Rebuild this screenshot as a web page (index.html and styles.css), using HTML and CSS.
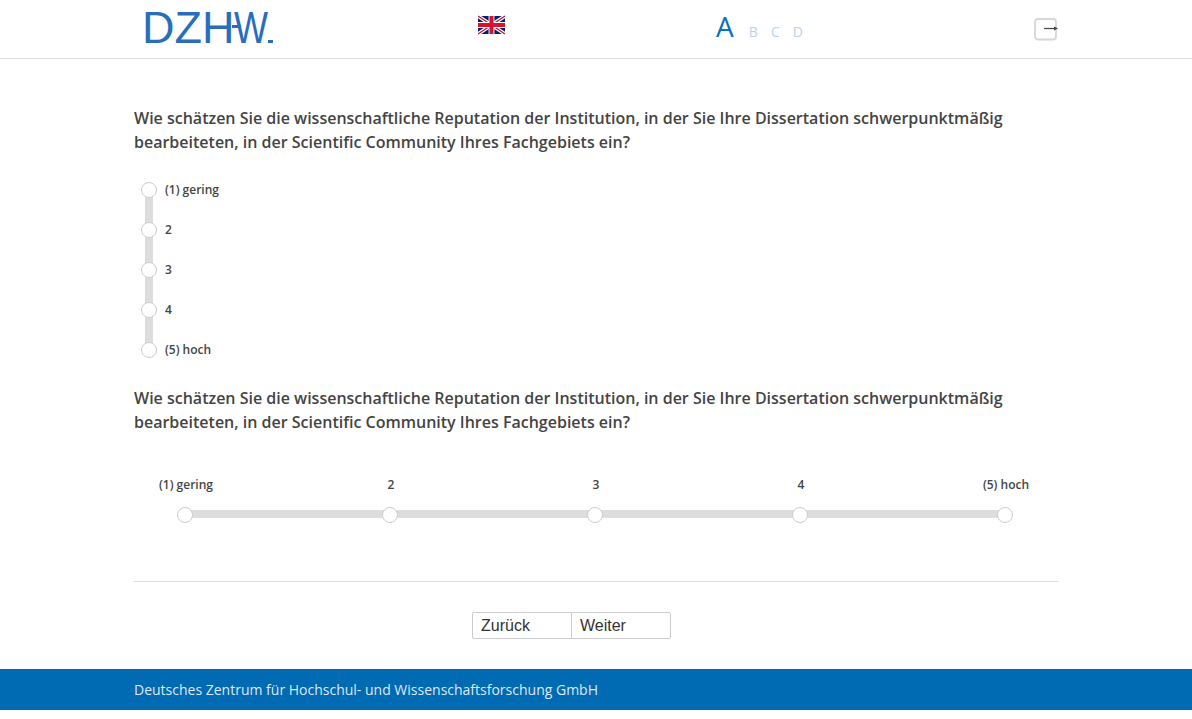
FILE: index.html
```html
<!DOCTYPE html>
<html lang="de">
<head>
<meta charset="utf-8">
<title>DZHW</title>
<link rel="stylesheet" href="styles.css">
</head>
<body>
<header class="header">
  <div class="logo"><span class="logo-text">DZH<span class="logo-w">W</span></span><span class="logo-dot"></span><span class="logo-bar"></span></div>
  <a class="flag" aria-label="English">
    <svg width="27" height="20" viewBox="0 0 60 40">
      <rect width="60" height="40" fill="#012169"/>
      <path d="M0 0L60 40M60 0L0 40" stroke="#fff" stroke-width="8"/>
      <path d="M0 0L60 40M60 0L0 40" stroke="#c8102e" stroke-width="3"/>
      <path d="M30 0V40M0 20H60" stroke="#fff" stroke-width="13"/>
      <path d="M30 0V40M0 20H60" stroke="#d8112e" stroke-width="9"/>
    </svg>
  </a>
  <div class="fontsizes">
    <span class="size-active">A</span>
    <span class="size">B</span>
    <span class="size">C</span>
    <span class="size">D</span>
  </div>
  <a class="exit" aria-label="Beenden">
    <svg width="25" height="23" viewBox="0 0 25 23">
      <rect x="1" y="1" width="21" height="20.5" rx="3" fill="#fff" stroke="#d6d6d6" stroke-width="1.8"/>
      <path d="M10 10.5H21" stroke="#444" stroke-width="1.2"/>
      <path d="M20 8.5L24 10.5L20 12.5Z" fill="#444"/>
    </svg>
  </a>
</header>

<main class="main">
  <h2 class="question">Wie schätzen Sie die wissenschaftliche Reputation der Institution, in der Sie Ihre Dissertation schwerpunktmäßig bearbeiteten, in der Scientific Community Ihres Fachgebiets ein?</h2>
  <div class="vscale">
    <div class="vtrack"></div>
    <label class="vrow"><span class="radio"></span><span class="vlabel">(1) gering</span></label>
    <label class="vrow"><span class="radio"></span><span class="vlabel">2</span></label>
    <label class="vrow"><span class="radio"></span><span class="vlabel">3</span></label>
    <label class="vrow"><span class="radio"></span><span class="vlabel">4</span></label>
    <label class="vrow"><span class="radio"></span><span class="vlabel">(5) hoch</span></label>
  </div>

  <h2 class="question">Wie schätzen Sie die wissenschaftliche Reputation der Institution, in der Sie Ihre Dissertation schwerpunktmäßig bearbeiteten, in der Scientific Community Ihres Fachgebiets ein?</h2>
  <div class="hscale">
    <div class="htrack"></div>
    <label class="hitem"><span class="hlabel">(1) gering</span><span class="radio"></span></label>
    <label class="hitem"><span class="hlabel">2</span><span class="radio"></span></label>
    <label class="hitem"><span class="hlabel">3</span><span class="radio"></span></label>
    <label class="hitem"><span class="hlabel">4</span><span class="radio"></span></label>
    <label class="hitem"><span class="hlabel">(5) hoch</span><span class="radio"></span></label>
  </div>

  <hr class="divider">
  <div class="nav">
    <button class="btn" type="button">Zurück</button><button class="btn btn-next" type="button">Weiter</button>
  </div>
</main>

<footer class="footer">Deutsches Zentrum für Hochschul- und Wissenschaftsforschung GmbH</footer>
</body>
</html>
```
FILE: styles.css
```css
* { box-sizing: border-box; }
html, body { margin: 0; padding: 0; background: #fff; }
body { font-family: "Open Sans", sans-serif; color: #444; height: 719px; overflow: hidden; }

.header {
  height: 59px;
  border-bottom: 1px solid #ddd;
  display: flex;
  align-items: flex-start;
  padding-left: 142px;
}
.logo {
  position: relative;
  width: 336px;
  height: 58px;
  padding-top: 1px;
  color: #2a6ebb;
  font-family: "Liberation Sans", Arial, sans-serif;
  font-weight: 400;
  font-size: 45px;
  line-height: 54px;
  white-space: nowrap;
}
.logo-w { display: inline-block; transform: scaleX(0.8); transform-origin: left center; }
.logo-dot { position: absolute; left: 126px; top: 40px; width: 5px; height: 3px; background: #2a6ebb; }
.logo-bar { position: absolute; left: 90px; top: 25px; width: 9px; height: 3px; background: #2a6ebb; }
.flag { width: 238px; height: 20px; margin-top: 15px; }
.flag svg { display: block; }
.fontsizes {
  width: 318px;
  display: flex;
  align-items: baseline;
  height: 58px;
  padding-top: 4px;
  color: #0a70c2;
}
.size-active { font-size: 28px; line-height: 44px; margin-right: 15px; }
.size { font-size: 14px; color: #b6d5ec; margin-right: 10px; width: 12px; }
.exit { width: 25px; height: 23px; margin-top: 18px; }
.exit svg { display: block; }

.main { width: 924px; margin-left: 134px; padding-top: 47px; }
.question {
  margin: 0;
  font-size: 16px;
  font-weight: 600;
  line-height: 24px;
  color: #444;
}

.vscale { position: relative; margin-top: 16px; width: 200px; padding-left: 7px; margin-bottom: 16px; }
.vtrack { position: absolute; left: 11px; top: 20px; bottom: 20px; width: 8px; background: #ddd; }
.vrow { position: relative; display: flex; align-items: center; height: 40px; gap: 8px; }
.vlabel { font-size: 12px; font-weight: 600; color: #444; line-height: 16px; }

.radio {
  display: block;
  flex: none;
  width: 16px;
  height: 16px;
  border-radius: 50%;
  background: #fff;
  border: 1px solid #ccc;
}

.hscale {
  position: relative;
  display: flex;
  justify-content: space-between;
  width: 880px;
  margin: 42px 0 0 21px;
  height: 58px;
}
.htrack { position: absolute; left: 30px; right: 30px; top: 34px; height: 8px; background: #ddd; }
.hitem { position: relative; width: 60px; display: flex; flex-direction: column; align-items: center; padding-top: 1px; }
.hlabel { font-size: 12px; font-weight: 600; color: #444; line-height: 16px; margin-bottom: 14px; margin-left: 2px; white-space: nowrap; }

.divider { border: 0; border-top: 1px solid #ddd; margin: 47px 0 0; height: 1px; }
.nav { display: flex; justify-content: center; margin-top: 30px; padding-right: 49px; }
.btn {
  width: 100px;
  height: 27px;
  padding: 0 0 0 8px;
  text-align: left;
  font-family: "Liberation Sans", Arial, sans-serif;
  font-size: 16px;
  color: #333;
  background: #fff;
  border: 1px solid #ccc;
  border-radius: 2px 0 0 2px;
}
.btn-next { margin-left: -1px; border-radius: 0 2px 2px 0; }

.footer {
  margin-top: 30px;
  height: 41px;
  background: #006ab3;
  color: #dfe9f2;
  font-size: 14px;
  line-height: 41px;
  padding-left: 134px;
}
```
